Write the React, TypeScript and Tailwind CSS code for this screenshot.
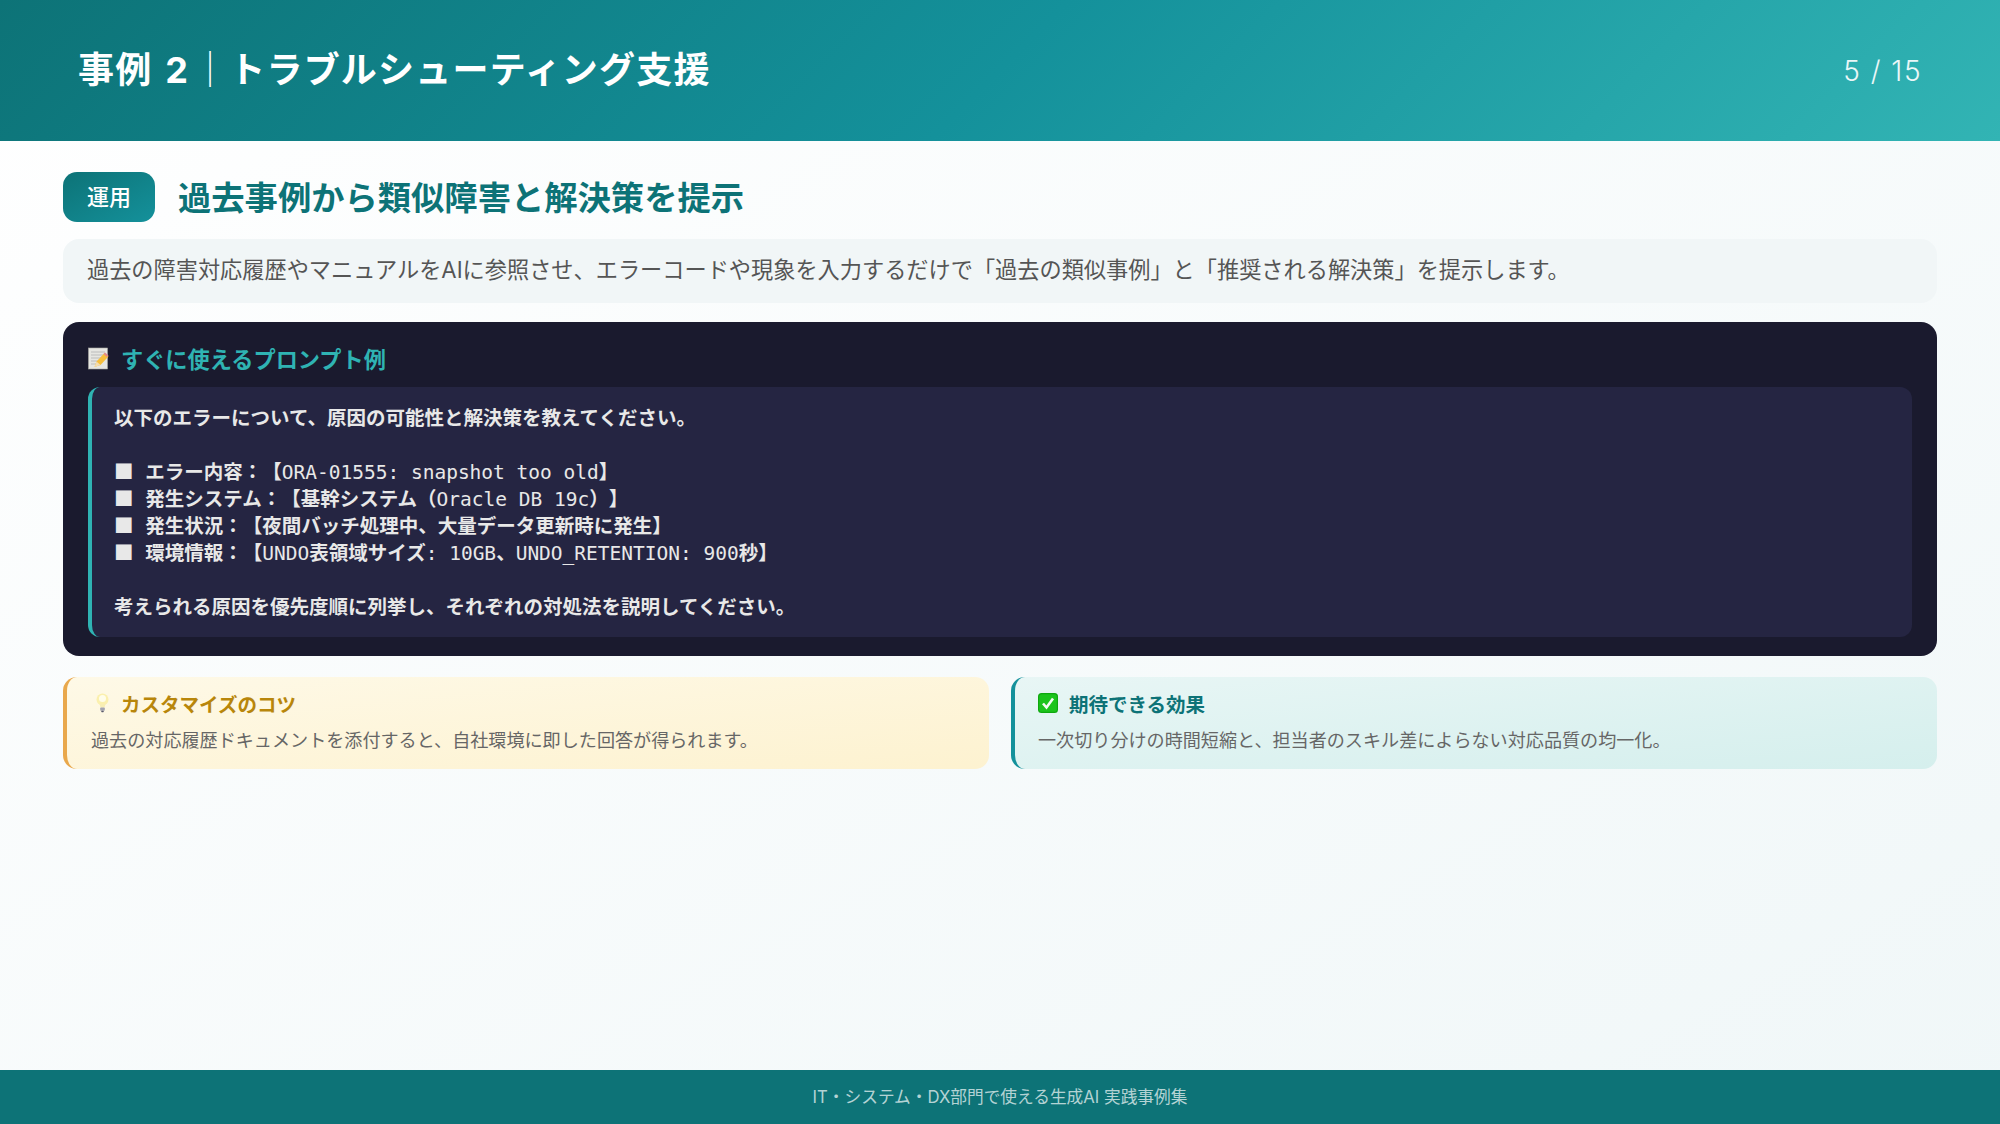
const sans = "font-['Inter','Noto_Sans_CJK_JP',sans-serif]"

function MemoIcon() {
  return (
    <svg width="21" height="23" viewBox="0 0 21 23" className="shrink-0">
      <rect x="0.5" y="1" width="19" height="21" fill="#e6e6e2" stroke="#a8a8a4" strokeWidth="0.6" />
      <path d="M3 5h14M3 8h14M3 11h10M3 14h7M3 17h5" stroke="#bcbcbc" strokeWidth="1" />
      <path d="M6.5 20l2-5.5L16.5 6l4 3.5-8 8.5z" fill="#f7bf3c" />
      <path d="M6.5 20l2-5.5 4 3.5z" fill="#f3dcb0" />
      <path d="M15.5 7l1.5-1.5 3.5 3-1.5 1.5z" fill="#e28a8a" />
    </svg>
  )
}

function BulbIcon() {
  return (
    <svg width="13" height="20" viewBox="0 0 13 20" className="shrink-0">
      <circle cx="6.5" cy="6.5" r="6" fill="#fbf0ae" />
      <circle cx="6.5" cy="5.5" r="3.5" fill="#fffdea" />
      <path d="M3.5 11h6l-1 3.5h-4z" fill="#f8eeb4" />
      <rect x="4.2" y="14.5" width="4.6" height="3.2" rx="0.8" fill="#a4a4b0" />
      <rect x="5.2" y="17.7" width="2.6" height="1.6" rx="0.7" fill="#5a5a6c" />
    </svg>
  )
}

function CheckIcon() {
  return (
    <svg width="20" height="20" viewBox="0 0 20 20" className="shrink-0 -mt-[3px]">
      <rect width="20" height="20" rx="3.5" fill="#0fa80f" />
      <rect x="1.2" y="1.2" width="17.6" height="17.6" rx="2.6" fill="#1cc41c" />
      <path d="M5 10.5l3.5 4 6.5-9" fill="none" stroke="#f4fbf4" strokeWidth="2.6" />
    </svg>
  )
}

const promptItems = [
  "エラー内容：【ORA-01555: snapshot too old】",
  "発生システム：【基幹システム（Oracle DB 19c）】",
  "発生状況：【夜間バッチ処理中、大量データ更新時に発生】",
  "環境情報：【UNDO表領域サイズ: 10GB、UNDO_RETENTION: 900秒】",
]

// 英数字だけ細くする
function MonoText({ text }: { text: string }) {
  return (
    <>
      {text.split(/([\x20-\x7e]+)/).map((part, i) =>
        i % 2 === 1 ? (
          <span key={i} className="font-normal">
            {part}
          </span>
        ) : (
          part
        ),
      )}
    </>
  )
}

export default function App() {
  return (
    <div className={`w-[2000px] h-[1124px] flex flex-col overflow-hidden bg-gradient-to-br from-white to-[#f0f7f8] ${sans}`}>
      <header className="h-[141px] shrink-0 flex items-center justify-between pl-[78px] pr-[78px] bg-[linear-gradient(135deg,#0d7377,#14919b_50%,#32b4b4)]">
        <h1 className="pb-[2px] text-[36px] font-bold text-white tracking-[1.2px]">
          事例 <span className="mx-[3px]">2</span>
          <span className="font-normal">｜</span>トラブルシューティング支援
        </h1>
        <span className="pt-[1px] text-[28px] font-light text-white/90 tracking-[1.5px]">5 / 15</span>
      </header>

      <main className="flex-1 flex flex-col px-[63px] pt-[31px]">
        <div className="flex items-center gap-[23px] h-[50px]">
          <span className="w-[92px] h-[50px] flex items-center justify-center rounded-[14px] bg-gradient-to-br from-[#0d7377] to-[#14919b] text-[22px] font-medium text-white">
            運用
          </span>
          <h2 className="pt-[3px] text-[33.3px] font-bold text-[#0d7377]">過去事例から類似障害と解決策を提示</h2>
        </div>

        <p className="mt-[17px] h-[64px] flex items-center px-[24px] pb-[2px] rounded-[16px] bg-[#f1f6f7] text-[22.2px] text-[#555]">
          過去の障害対応履歴やマニュアルをAIに参照させ、エラーコードや現象を入力するだけで「過去の類似事例」と「推奨される解決策」を提示します。
        </p>

        <section className="mt-[19px] h-[334px] rounded-[16px] bg-[#1a1a2e] px-[25px] pt-[20px]">
          <div className="flex items-center gap-[12px] h-[32px] text-[22.2px] font-bold text-[#2fb3b3]">
            <MemoIcon />
            <span className="pt-[3px]">すぐに使えるプロンプト例</span>
          </div>
          <div className="mt-[13px] h-[250px] rounded-[12px] border-l-[4px] border-[#2fb3b3] bg-[#252542] pl-[22px] pt-[18px] whitespace-pre text-[19.5px] font-bold text-[#e8e8e8] [text-spacing-trim:space-all] font-['DejaVu_Sans_Mono','Noto_Sans_CJK_JP',monospace]">
            <div className="h-[53px] leading-[27px]">以下のエラーについて、原因の可能性と解決策を教えてください。</div>
            {promptItems.map((item) => (
              <div key={item} className="h-[27px] leading-[26px]">
                <span className="font-normal font-['Noto_Sans_CJK_JP',sans-serif]">■</span>
                <span className="font-normal"> </span>
                <MonoText text={item} />
              </div>
            ))}
            <div className="mt-[28px] h-[27px] leading-[27px]">考えられる原因を優先度順に列挙し、それぞれの対処法を説明してください。</div>
          </div>
        </section>

        <div className="mt-[21px] grid grid-cols-2 gap-[22px]">
          <div className="h-[92px] rounded-[14px] border-l-[4px] border-[#e9a84c] bg-gradient-to-br from-[#fef9e7] to-[#fdf2d0] pl-[24px] pt-[13px]">
            <div className="flex items-center h-[28px] text-[19.5px] font-bold text-[#b8860b]">
              <span className="w-[30px] pl-[5px] -mt-[3px]">
                <BulbIcon />
              </span>
              <span className="pt-[3px]">カスタマイズのコツ</span>
            </div>
            <p className="mt-[9px] text-[18.1px] text-[#666]">過去の対応履歴ドキュメントを添付すると、自社環境に即した回答が得られます。</p>
          </div>
          <div className="h-[92px] rounded-[14px] border-l-[4px] border-[#14919b] bg-gradient-to-br from-[#e8f6f5] to-[#d5efed] pl-[23px] pt-[13px]">
            <div className="flex items-center gap-[11px] h-[28px] text-[19.5px] font-bold text-[#0d7377]">
              <CheckIcon />
              <span className="pt-[3px]">期待できる効果</span>
            </div>
            <p className="mt-[9px] text-[18.1px] text-[#666]">一次切り分けの時間短縮と、担当者のスキル差によらない対応品質の均一化。</p>
          </div>
        </div>
      </main>

      <footer className="h-[54px] shrink-0 flex items-center justify-center pt-[2px] bg-[#0d7377] text-[16.7px] text-white/70">
        IT・システム・DX部門で使える生成AI 実践事例集
      </footer>
    </div>
  )
}
